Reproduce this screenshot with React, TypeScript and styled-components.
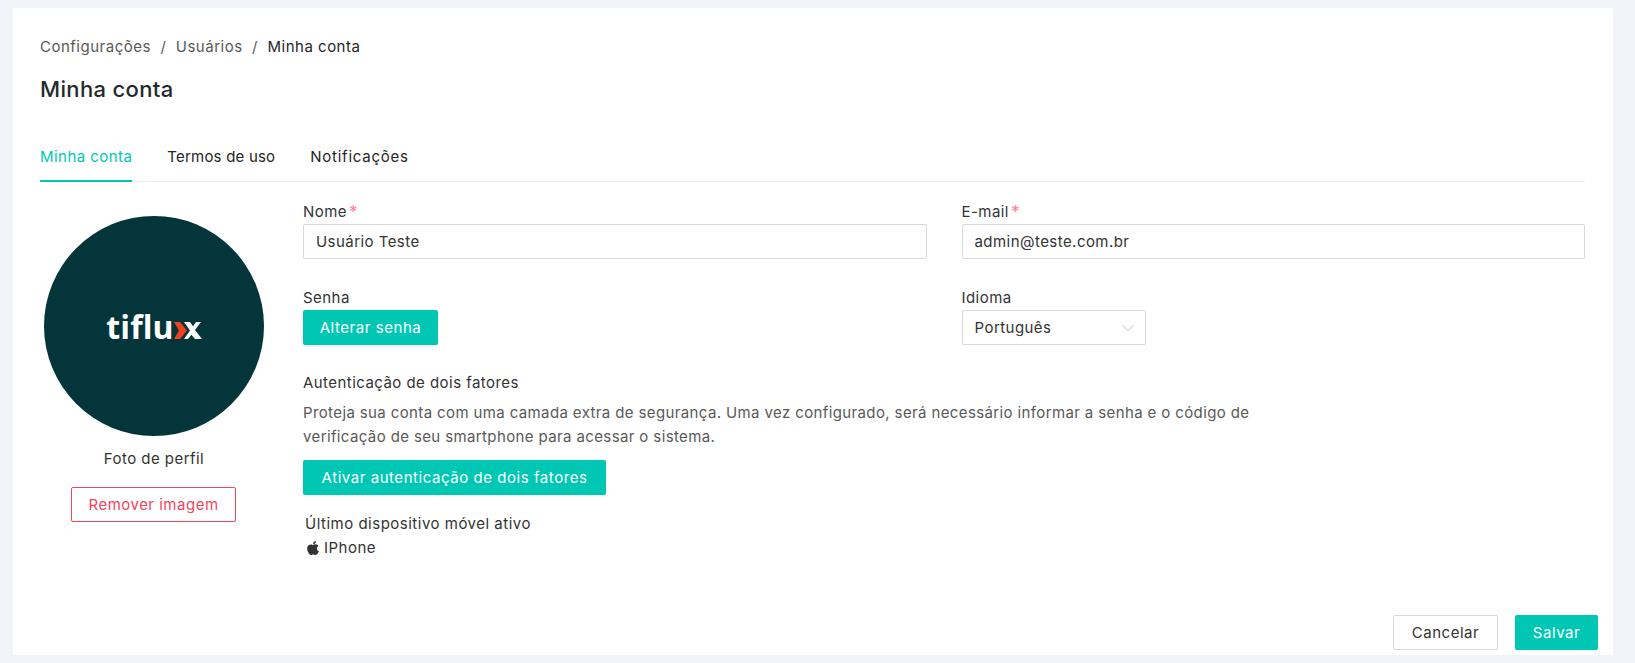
import { createGlobalStyle } from 'styled-components';
import styled from 'styled-components';
import { ChevronDown } from 'lucide-react';
import { FaApple } from 'react-icons/fa';

const GlobalStyle = createGlobalStyle`
  html, body {
    margin: 0;
    padding: 0;
    background: #f2f3f8;
    font-family: Inter, "Noto Sans", sans-serif;
    color: #333;
  }
  * { box-sizing: border-box; }
`;

const Page = styled.div`
  height: 663px;
  padding: 8px 22px 8px 13px;
`;

const Card = styled.main`
  height: 647px;
  background: #fff;
  padding: 26px 28px 5px 27px;
  display: flex;
  flex-direction: column;
`;

const Breadcrumb = styled.nav`
  display: flex;
  align-items: center;
  height: 24px;
  font-size: 15px;
  letter-spacing: 0.5px;
  color: #595959;
`;

const Separator = styled.span`
  margin: 0 9.5px;
`;

const Current = styled.span`
  color: #262626;
`;

const Title = styled.h1`
  margin: 17px 0 0;
  height: 28px;
  line-height: 28px;
  font-size: 22px;
  font-weight: 500;
  letter-spacing: 0.35px;
  color: #1f2a2e;
`;

const Tabs = styled.div`
  display: flex;
  gap: 35px;
  height: 56px;
  margin-top: 23px;
  border-bottom: 1px solid #ededed;
`;

const Tab = styled.div<{ $active?: boolean; $tracking: number }>`
  height: 56px;
  padding-top: 7px;
  line-height: 48px;
  font-size: 15px;
  letter-spacing: ${(p) => p.$tracking}px;
  color: ${(p) => (p.$active ? '#00c7b4' : '#262626')};
  border-bottom: ${(p) => (p.$active ? '2px solid #00c7b4' : 'none')};
`;

const Content = styled.div`
  flex: 1;
  display: flex;
`;

const ProfileColumn = styled.aside`
  width: 263px;
  flex-shrink: 0;
  padding-top: 34px;
  padding-right: 35px;
  display: flex;
  flex-direction: column;
  align-items: center;
`;

const Avatar = styled.div`
  width: 220px;
  height: 220px;
  border-radius: 50%;
  background: #03353b;
  display: flex;
  align-items: center;
  justify-content: center;
`;

const Logo = styled.div`
  display: flex;
  align-items: flex-end;
  margin-top: 1px;
`;

const LogoText = styled.span`
  font-family: "Open Sans", sans-serif;
  font-weight: 700;
  font-size: 32px;
  letter-spacing: 0.1px;
  color: #fff;
  line-height: 1;
`;

const LogoMark = styled.svg`
  width: 28px;
  height: 17px;
  margin-bottom: 4px;
`;

const PhotoLabel = styled.div`
  margin-top: 11px;
  font-size: 15px;
  line-height: 24px;
  letter-spacing: 0.45px;
  color: #333;
`;

const DangerButton = styled.button`
  margin-top: 16px;
  margin-left: -1px;
  width: 165px;
  height: 35px;
  background: #fff;
  border: 1px solid #f5455c;
  border-radius: 2px;
  color: #f5455c;
  font: inherit;
  font-size: 15px;
  letter-spacing: 0.5px;
`;

const FormColumn = styled.section`
  flex: 1;
  padding-top: 18px;
`;

const FieldGrid = styled.div`
  display: grid;
  grid-template-columns: 1fr 1fr;
  column-gap: 35px;
  row-gap: 27px;
`;

const Field = styled.div`
  display: flex;
  flex-direction: column;
`;

const Label = styled.label`
  height: 24px;
  line-height: 24px;
  font-size: 15px;
  letter-spacing: 0.45px;
  color: #333;
`;

const Required = styled.span`
  color: #ff7a8e;
  font-size: 17px;
  line-height: 1;
  margin-left: 2px;
  vertical-align: -1px;
`;

const Input = styled.input`
  height: 35px;
  border: 1px solid #d9d9d9;
  border-radius: 2px;
  padding: 0 12px;
  font: inherit;
  font-size: 15px;
  letter-spacing: 0.45px;
  color: #333;
  background: #fff;
`;

const Select = styled.div`
  width: 184px;
  height: 35px;
  border: 1px solid #d9d9d9;
  border-radius: 2px;
  padding: 0 7px 0 12px;
  display: flex;
  align-items: center;
  justify-content: space-between;
  font-size: 15px;
  letter-spacing: 0.45px;
  color: #333;
`;

const PrimaryButton = styled.button<{ $width: number }>`
  width: ${(p) => p.$width}px;
  height: 35px;
  border: none;
  border-radius: 2px;
  background: #00c7b4;
  color: #fff;
  font: inherit;
  font-size: 15px;
  letter-spacing: 0.55px;
  box-shadow: 0 2px 1px rgba(0, 0, 0, 0.04);
`;

const TwoFactor = styled.div`
  margin-top: 26px;
  width: 960px;
`;

const SectionTitle = styled.div`
  height: 24px;
  line-height: 24px;
  font-size: 15px;
  letter-spacing: 0.45px;
  color: #333;
`;

const Description = styled.p`
  margin: 6px 0 11px;
  font-size: 15px;
  line-height: 24px;
  letter-spacing: 0.38px;
  color: #595959;
`;

const Device = styled.div`
  margin-top: 17px;
  padding-left: 2px;
  font-size: 15px;
  letter-spacing: 0.5px;
  line-height: 24px;
  color: #333;
`;

const DeviceName = styled.div`
  display: flex;
  align-items: center;
  gap: 3px;
`;

const Footer = styled.footer`
  display: flex;
  justify-content: flex-end;
  gap: 17px;
  margin-right: -13px;
`;

const CancelButton = styled.button`
  width: 105px;
  height: 35px;
  background: #fff;
  border: 1px solid #d9d9d9;
  border-radius: 2px;
  font: inherit;
  font-size: 15px;
  letter-spacing: 0.5px;
  color: #333;
`;

export default function App() {
  return (
    <Page>
      <GlobalStyle />
      <Card>
        <Breadcrumb>
          <span>Configurações</span>
          <Separator>/</Separator>
          <span>Usuários</span>
          <Separator>/</Separator>
          <Current>Minha conta</Current>
        </Breadcrumb>
        <Title>Minha conta</Title>
        <Tabs>
          <Tab $active $tracking={0.45}>Minha conta</Tab>
          <Tab $tracking={0.2}>Termos de uso</Tab>
          <Tab $tracking={0.75}>Notificações</Tab>
        </Tabs>
        <Content>
          <ProfileColumn>
            <Avatar>
              <Logo>
                <LogoText>tiflu</LogoText>
                <LogoMark viewBox="0 0 28 16" preserveAspectRatio="none">
                  <path d="M0 0h6l7 8-7 8H0l5-8z" fill="#f0401f" />
                  <path d="M10 0h6l3 4 3-4h5l-6 7.5 7 8.5h-7l-3.5-4-3.5 4h-4l6-8z" fill="#fff" />
                </LogoMark>
              </Logo>
            </Avatar>
            <PhotoLabel>Foto de perfil</PhotoLabel>
            <DangerButton>Remover imagem</DangerButton>
          </ProfileColumn>
          <FormColumn>
            <FieldGrid>
              <Field>
                <Label>Nome<Required>*</Required></Label>
                <Input defaultValue="Usuário Teste" />
              </Field>
              <Field>
                <Label>E-mail<Required>*</Required></Label>
                <Input defaultValue="admin@teste.com.br" />
              </Field>
              <Field>
                <Label>Senha</Label>
                <PrimaryButton $width={135}>Alterar senha</PrimaryButton>
              </Field>
              <Field>
                <Label>Idioma</Label>
                <Select>
                  Português
                  <ChevronDown size={20} color="#bfbfbf" strokeWidth={1.2} />
                </Select>
              </Field>
            </FieldGrid>
            <TwoFactor>
              <SectionTitle>Autenticação de dois fatores</SectionTitle>
              <Description>
                Proteja sua conta com uma camada extra de segurança. Uma vez configurado, será necessário informar a senha e o código de verificação de seu smartphone para acessar o sistema.
              </Description>
              <PrimaryButton $width={303}>Ativar autenticação de dois fatores</PrimaryButton>
            </TwoFactor>
            <Device>
              <div>Último dispositivo móvel ativo</div>
              <DeviceName>
                <FaApple size={16} color="#333" />
                IPhone
              </DeviceName>
            </Device>
          </FormColumn>
        </Content>
        <Footer>
          <CancelButton>Cancelar</CancelButton>
          <PrimaryButton $width={83}>Salvar</PrimaryButton>
        </Footer>
      </Card>
    </Page>
  );
}
